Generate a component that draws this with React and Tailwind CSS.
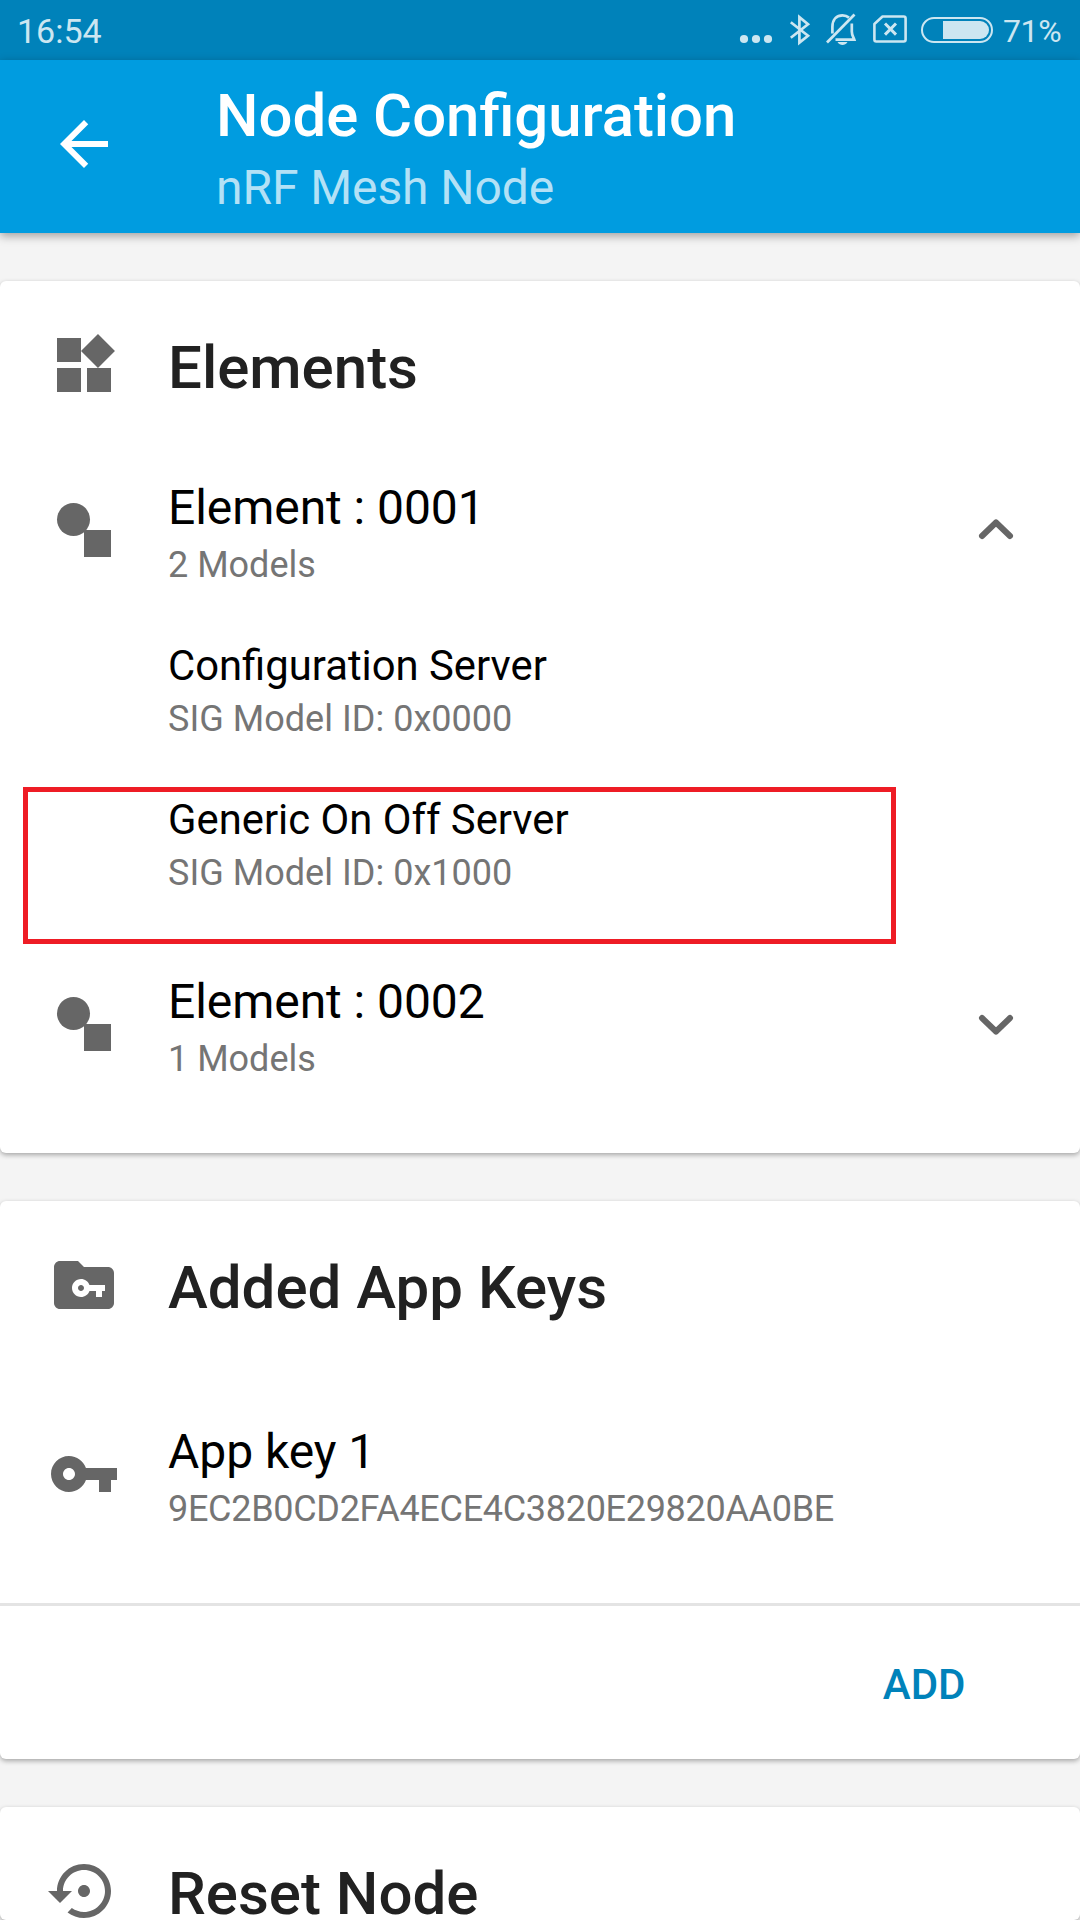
const ROBOTO = "font-['Roboto','Liberation_Sans',sans-serif]";

function Icon({ children, className = "fill-[#666666]" }) {
  return (
    <svg viewBox="0 0 24 24" className={`size-[72px] shrink-0 ${className}`}>
      {children}
    </svg>
  );
}

function StatusIcons() {
  return (
    <div className="flex h-[60px] items-start">
      <svg viewBox="739 0 34 60" className="h-[60px] w-[34px] fill-[#cce6f1]">
        <circle cx="744" cy="39" r="4.1" />
        <circle cx="756" cy="39" r="4.1" />
        <circle cx="768" cy="39" r="4.1" />
      </svg>
      <svg viewBox="773 0 44 60" className="h-[60px] w-[44px]">
        <path
          d="M790.8 22.2 L808 35.8 L799.4 42.6 V17.2 L808 24.2 L790.8 37.8"
          fill="none"
          stroke="#cce6f1"
          strokeWidth="2.7"
        />
      </svg>
      <svg viewBox="817 0 48 60" className="h-[60px] w-[48px]" fill="none" stroke="#cce6f1" strokeWidth="2.7">
        <path d="M827 42.5 L854.5 14.5" />
        <path d="M832.4 33.5 V27 C832.4 19 837 15.4 842.5 15.4 C845 15.4 847.3 16.2 849 17.6" />
        <path d="M851.8 23.5 V31.5 C851.8 35.5 853.6 37.5 854.3 39.7 H835.5" />
        <path d="M837.5 42 H847.5 C846 44.2 844.5 45 842.5 45 C840.5 45 839 44.2 837.5 42 Z" fill="#cce6f1" stroke="none" />
      </svg>
      <svg viewBox="865 0 48 60" className="h-[60px] w-[48px]" fill="none" stroke="#cce6f1" strokeWidth="2.6">
        <path d="M882.5 16.5 H903.7 Q905.6 16.5 905.6 18.4 V39.6 Q905.6 41.5 903.7 41.5 H876.3 Q874.4 41.5 874.4 39.6 V24 Z" strokeLinejoin="round" />
        <path d="M885 23.5 L896 34.6 M896 23.5 L885 34.6" strokeWidth="3" />
      </svg>
      <svg viewBox="913 0 88 60" className="h-[60px] w-[88px]">
        <rect x="922" y="18" width="70" height="24" rx="12" fill="none" stroke="#cce6f1" strokeWidth="2" />
        <path d="M943 21 H980 A9 9 0 0 1 980 39 H943 Z" fill="#cce6f1" />
      </svg>
    </div>
  );
}

function StatusBar() {
  return (
    <div className="flex h-[60px] justify-between bg-[#0082ba] pl-[17px] pr-[17px] text-[#cce6f1]">
      <span className="mt-[11px] text-[34px] leading-[40px]">16:54</span>
      <div className="flex">
        <StatusIcons />
        <span className="mt-[12px] w-[62px] pl-[2px] text-[32px] leading-[38px] tracking-[-0.4px]">71%</span>
      </div>
    </div>
  );
}

function Header() {
  return (
    <header className="relative flex h-[173px] bg-[#009ce0] pl-[48px] shadow-[0_3px_9px_rgba(0,0,0,0.35)]">
      <Icon className="mt-[48px] fill-white">
        <path d="M20 11H7.83l5.59-5.59L12 4l-8 8 8 8 1.41-1.41L7.83 13H20v-2z" />
      </Icon>
      <div className="ml-[96px] pt-[20px]">
        <h1 className="text-[59.85px] leading-[71px] font-medium text-white">Node Configuration</h1>
        <p className="mt-[8px] text-[48px] leading-[57px] tracking-[-0.08px] text-[#b3e1f6]">nRF Mesh Node</p>
      </div>
    </header>
  );
}

function Card({ className = "", children }) {
  return (
    <section className={`rounded-[6px] bg-white pt-[48px] shadow-[0_2px_5px_rgba(0,0,0,0.32)] ${className}`}>
      {children}
    </section>
  );
}

function CardTitle({ icon, children }) {
  return (
    <div className="flex h-[72px] pl-[48px]">
      <Icon>{icon}</Icon>
      <h2 className="mt-[3px] ml-[48px] text-[60px] leading-[71px] font-medium whitespace-nowrap text-[#212121]">
        {children}
      </h2>
    </div>
  );
}

function Row({ icon, title, subtitle, trailing, subtitleClass = "", className = "" }) {
  return (
    <div className={`flex h-[107px] pr-[48px] pl-[48px] ${className}`}>
      <Icon className="mt-[15px] fill-[#666666]">{icon}</Icon>
      <div className="ml-[48px] flex-1">
        <div className="text-[48px] leading-[57px] tracking-[-0.06px] text-black">{title}</div>
        <div className={`mt-[8px] text-[36px] leading-[42px] text-[#757575] ${subtitleClass}`}>{subtitle}</div>
      </div>
      {trailing}
    </div>
  );
}

function Chevron({ up }) {
  return (
    <svg viewBox="0 0 72 72" className="mt-[14px] size-[72px]" fill="none" stroke="#666666" strokeWidth="6" strokeLinecap="round" strokeLinejoin="round">
      <path d={up ? "M22 43 L36 29.5 L50 43" : "M22 31 L36 44.5 L50 31"} />
    </svg>
  );
}

function Model({ name, id, highlighted }) {
  return (
    <div className="relative mt-[55px] h-[99px] pl-[168px]">
      <div className="text-[41.8px] leading-[49px] text-black">{name}</div>
      <div className="mt-[8px] text-[36px] leading-[42px] tracking-[0.03px] text-[#757575]">SIG Model ID: {id}</div>
      {highlighted && (
        <div className="absolute -top-[8px] left-[23px] h-[157px] w-[873px] border-[5px] border-[#ee1c25]" />
      )}
    </div>
  );
}

const elementShape = (
  <>
    <circle cx="8.5" cy="8.5" r="5.5" />
    <path d="M12 12h9v9h-9z" />
  </>
);

export default function App() {
  return (
    <div className={`h-[1920px] w-[1080px] overflow-hidden bg-[#f4f4f4] ${ROBOTO}`}>
      <StatusBar />
      <Header />
      <main className="flex flex-col gap-[48px] pt-[48px]">
        <Card className="h-[872px]">
          <CardTitle
            icon={<path d="M13 13v8h8v-8h-8zM3 21h8v-8H3v8zM3 3v8h8V3H3zm13.66-1.31L11 7.34 16.66 13l5.66-5.66-5.66-5.65z" />}
          >
            Elements
          </CardTitle>
          <Row className="mt-[78px]" icon={elementShape} title="Element : 0001" subtitle="2 Models" trailing={<Chevron up />} />
          <Model name="Configuration Server" id="0x0000" />
          <Model name="Generic On Off Server" id="0x1000" highlighted />
          <Row className="mt-[79px]" icon={elementShape} title="Element : 0002" subtitle="1 Models" trailing={<Chevron />} />
        </Card>

        <Card className="h-[558px]">
          <CardTitle
            icon={
              <path
                fillRule="evenodd"
                d="M4 4h6l2 2h8c1.1 0 2 .9 2 2v10c0 1.1-.9 2-2 2H4c-1.1 0-2-.9-2-2V6c0-1.1.9-2 2-2zM13.83 12C13.42 10.83 12.3 10 11 10c-1.66 0-3 1.34-3 3s1.34 3 3 3c1.3 0 2.42-.83 2.83-2H16v2h2v-2h1v-2zM11 14c-.55 0-1-.45-1-1s.45-1 1-1 1 .45 1 1-.45 1-1 1z"
              />
            }
          >
            Added App Keys
          </CardTitle>
          <Row
            className="mt-[102px]"
            icon={<path d="M12.65 10C11.83 7.67 9.61 6 7 6c-3.31 0-6 2.69-6 6s2.69 6 6 6c2.61 0 4.83-1.67 5.65-4H17v4h4v-4h2v-4H12.65zM7 14c-1.1 0-2-.9-2-2s.9-2 2-2 2 .9 2 2-.9 2-2 2z" />}
            title="App key 1"
            subtitle="9EC2B0CD2FA4ECE4C3820E29820AA0BE"
            subtitleClass="tracking-[-0.3px]"
          />
          <div className="mt-[73px] h-[3px] bg-[#e4e4e4]" />
          <div className="flex justify-end pt-[54px] pr-[114.5px]">
            <button className="text-[42px] leading-[49px] font-medium text-[#0082ba]">ADD</button>
          </div>
        </Card>

        <Card className="h-[113px]">
          <CardTitle
            icon={<path d="M14 12c0-1.1-.9-2-2-2s-2 .9-2 2 .9 2 2 2 2-.9 2-2zm-2-9c-4.97 0-9 4.03-9 9H0l4 4 4-4H5c0-3.87 3.13-7 7-7s7 3.13 7 7-3.13 7-7 7c-1.51 0-2.91-.49-4.06-1.3l-1.42 1.44C8.04 20.3 9.94 21 12 21c4.97 0 9-4.03 9-9s-4.03-9-9-9z" />}
          >
            Reset Node
          </CardTitle>
        </Card>
      </main>
    </div>
  );
}
